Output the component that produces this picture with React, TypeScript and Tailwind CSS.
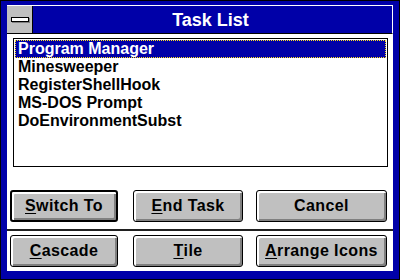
import React from 'react'

const tasks = ['Program Manager', 'Minesweeper', 'RegisterShellHook', 'MS-DOS Prompt', 'DoEnvironmentSubst']

function Btn({ label, hot, width, isDefault }: { label: string; hot?: number; width: string; isDefault?: boolean }) {
  return (
    <button
      className={`${width} h-[32px] bg-[#c0c0c0] rounded-[3px] border-black ${isDefault ? 'border-2' : 'border'} shadow-[inset_2px_2px_0_#ffffff,inset_-2px_-2px_0_#808080] text-[16px] tracking-[0.4px] font-bold text-black flex items-center justify-center`}
    >
      {hot === undefined ? (
        label
      ) : (
        <>
          {label.slice(0, hot)}
          <span className="underline underline-offset-2">{label[hot]}</span>
          {label.slice(hot + 1)}
        </>
      )}
    </button>
  )
}

export default function App() {
  return (
    <div className="w-[400px] h-[280px] bg-black p-px font-['Liberation_Sans',Arial,sans-serif]">
      <div className="h-full bg-[#0000a8] pl-[6px] pr-[6px] pt-[4px] pb-[8px] flex flex-col">
        {/* title bar */}
        <div className="h-[29px] border-t border-r border-white flex border-b border-b-black">
          <div className="w-[26px] bg-[#c0c0c0] border-r border-black flex items-center justify-center">
            <div className="w-[18px] h-[5px] bg-white border border-black shadow-[1px_1px_0_#808080]" />
          </div>
          <div className="flex-1 flex items-center justify-center text-white font-bold text-[18px] leading-none pr-[4px]">
            Task List
          </div>
        </div>

        {/* client area */}
        <div className="flex-1 bg-white flex flex-col">
          <div className="ml-[6px] mr-[5px] mt-[4px] h-[129px] border border-black bg-white pt-px px-px">
            {tasks.map((t, i) => (
              <div
                key={t}
                className={`h-[18px] text-[16px] font-bold leading-[16px] pl-[2px] ${
                  i === 0 ? 'bg-[#0000a8] text-white border border-dotted border-yellow-300' : 'text-black border border-transparent'
                }`}
              >
                {t}
              </div>
            ))}
          </div>

          <div className="flex ml-[3px] mt-[23px]">
            <Btn label="Switch To" hot={0} width="w-[108px]" isDefault />
            <div className="w-[15px]" />
            <Btn label="End Task" hot={0} width="w-[110px]" />
            <div className="w-[13px]" />
            <Btn label="Cancel" width="w-[131px]" />
          </div>

          <div className="h-[2px] bg-[#202020] mt-[7px]" />

          <div className="flex ml-[3px] mt-[4px]">
            <Btn label="Cascade" hot={0} width="w-[108px]" />
            <div className="w-[15px]" />
            <Btn label="Tile" hot={0} width="w-[110px]" />
            <div className="w-[13px]" />
            <Btn label="Arrange Icons" hot={0} width="w-[131px]" />
          </div>
        </div>
      </div>
    </div>
  )
}
